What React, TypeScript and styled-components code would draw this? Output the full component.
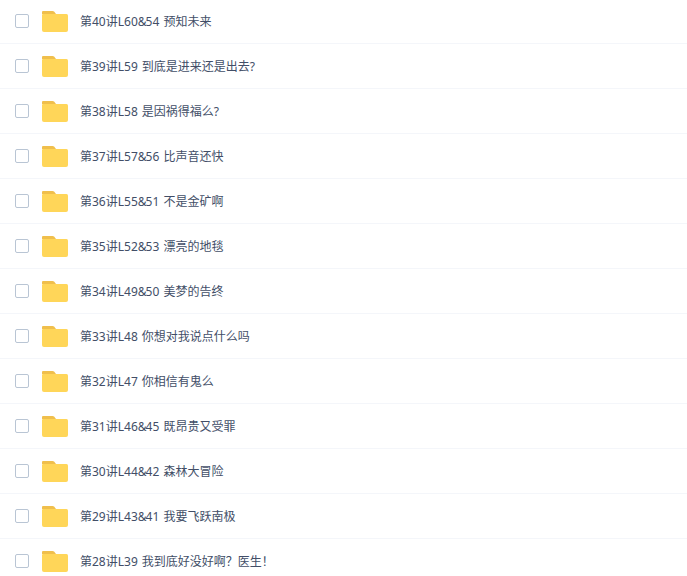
import React from "react";
import styled, { createGlobalStyle } from "styled-components";

const Global = createGlobalStyle`
  html, body { margin: 0; padding: 0; background: #fff; overflow: hidden; }
`;

const List = styled.ul`
  list-style: none;
  margin: -1px 0 0;
  padding: 0;
  width: 687px;
  height: 577px;
  overflow: hidden;
  font-family: "Noto Sans", "Noto Sans CJK SC", sans-serif;
`;

const Row = styled.li`
  display: flex;
  align-items: center;
  box-sizing: border-box;
  height: 45px;
  padding-left: 15px;
  border-bottom: 1px solid #f4f6fa;
`;

const Check = styled.span`
  box-sizing: border-box;
  width: 14px;
  height: 14px;
  flex: none;
  border: 1px solid #b9c5d4;
  border-radius: 2px;
  background: #fff;
  margin-right: 13px;
`;

const Folder = styled.svg`
  display: block;
  flex: none;
  width: 26px;
  height: 21px;
  margin: 1px 12px 0 0;
`;

const Name = styled.span`
  font-size: 12px;
  line-height: 18px;
  color: #424e67;
  white-space: pre;
  word-spacing: 1px;
  margin-top: 2px;
`;

const Amp = styled.span`
  letter-spacing: -1px;
`;

const items = [
  "第40讲L60&54 预知未来",
  "第39讲L59 到底是进来还是出去?",
  "第38讲L58 是因祸得福么?",
  "第37讲L57&56 比声音还快",
  "第36讲L55&51 不是金矿啊",
  "第35讲L52&53 漂亮的地毯",
  "第34讲L49&50 美梦的告终",
  "第33讲L48 你想对我说点什么吗",
  "第32讲L47 你相信有鬼么",
  "第31讲L46&45 既昂贵又受罪",
  "第30讲L44&42 森林大冒险",
  "第29讲L43&41 我要飞跃南极",
  "第28讲L39 我到底好没好啊\uFF1F医生\uFF01",
];

const FolderIcon = () => (
  <Folder viewBox="0 0 26 21" aria-hidden="true">
    <path d="M1 0h9.500c.8 0 1.300.3 1.800.8L14 3H0V1a1 1 0 0 1 1-1z" fill="#f0bf4c" />
    <path d="M1 3h23.500A1.500 1.500 0 0 1 26 4.500V19a2 2 0 0 1-2 2H2a2 2 0 0 1-2-2V4a1 1 0 0 1 1-1z" fill="#ffd659" />
  </Folder>
);

const Title = ({ text }: { text: string }) => {
  const [head, tail] = text.split("&");
  return (
    <Name>
      {tail === undefined ? (
        head
      ) : (
        <>
          {head}
          <Amp>&amp;</Amp>
          {tail}
        </>
      )}
    </Name>
  );
};

export default function App() {
  return (
    <>
      <Global />
      <List>
        {items.map((t) => (
          <Row key={t}>
            <Check />
            <FolderIcon />
            <Title text={t} />
          </Row>
        ))}
      </List>
    </>
  );
}
